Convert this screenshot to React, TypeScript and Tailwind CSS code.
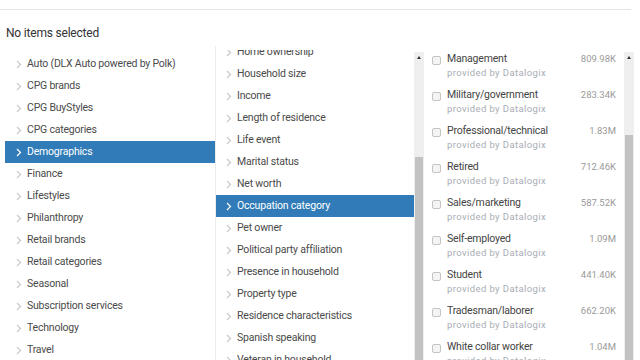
const categories = [
  'Auto (DLX Auto powered by Polk)',
  'CPG brands',
  'CPG BuyStyles',
  'CPG categories',
  'Demographics',
  'Finance',
  'Lifestyles',
  'Philanthropy',
  'Retail brands',
  'Retail categories',
  'Seasonal',
  'Subscription services',
  'Technology',
  'Travel',
]

const demographics = [
  'Home ownership',
  'Household size',
  'Income',
  'Length of residence',
  'Life event',
  'Marital status',
  'Net worth',
  'Occupation category',
  'Pet owner',
  'Political party affiliation',
  'Presence in household',
  'Property type',
  'Residence characteristics',
  'Spanish speaking',
  'Veteran in household',
]

const occupations = [
  { name: 'Management', size: '809.98K' },
  { name: 'Military/government', size: '283.34K' },
  { name: 'Professional/technical', size: '1.83M' },
  { name: 'Retired', size: '712.46K' },
  { name: 'Sales/marketing', size: '587.52K' },
  { name: 'Self-employed', size: '1.09M' },
  { name: 'Student', size: '441.40K' },
  { name: 'Tradesman/laborer', size: '662.20K' },
  { name: 'White collar worker', size: '1.04M' },
]

function Chevron({ active }: { active: boolean }) {
  return (
    <svg width="6" height="9" viewBox="0 0 6 9" className="shrink-0">
      <polyline
        points="1,1 4.5,4.5 1,8"
        fill="none"
        stroke={active ? '#ffffff' : '#cacaca'}
        strokeWidth="1.2"
      />
    </svg>
  )
}

function Row({ label, active, chevronPad }: { label: string; active: boolean; chevronPad: string }) {
  return (
    <div
      className={`flex h-[22px] items-center whitespace-nowrap ${chevronPad} ${
        active ? 'bg-[#307bb8] text-white' : 'text-[#4a4a4a]'
      }`}
    >
      <Chevron active={active} />
      <span className="ml-[5px]">{label}</span>
    </div>
  )
}

function Scrollbar({ thumbTop }: { thumbTop: string }) {
  return (
    <div className="relative mt-[6px] h-[308px] w-[10px] shrink-0 bg-[#efefef]">
      <div className="flex h-[10px] items-center justify-center">
        <div className="h-0 w-0 border-x-[2.5px] border-b-[3px] border-x-transparent border-b-[#333]" />
      </div>
      <div className={`absolute left-[1px] right-[1px] bottom-0 bg-[#c2c2c2] ${thumbTop}`} />
    </div>
  )
}

export default function App() {
  return (
    <div
      className="h-[360px] w-[640px] overflow-hidden bg-white text-[10.5px] tracking-[-0.2px]"
      style={{ fontFamily: 'Roboto, "Liberation Sans", sans-serif' }}
    >
      <div className="mt-[9px] w-[631px] border-t border-[#e4e4e4]" />
      <div className="mt-[16px] pl-[6px] text-[12px] leading-[15px] text-[#333]">No items selected</div>

      <div className="mt-[5px] flex items-start">
        <div className="w-[215px] shrink-0 pt-[7px] pl-[5px]">
          {categories.map((c) => (
            <Row key={c} label={c} active={c === 'Demographics'} chevronPad="pl-[11px]" />
          ))}
        </div>

        <div className="flex h-[314px] shrink-0 border-l border-[#ececec]">
          <div className="mt-[4px] h-[310px] w-[198px] overflow-hidden">
            <div className="-mt-[9px]">
              {demographics.map((d) => (
                <Row key={d} label={d} active={d === 'Occupation category'} chevronPad="pl-[10px]" />
              ))}
            </div>
          </div>
          <Scrollbar thumbTop="top-[105px]" />
        </div>

        <div className="flex h-[314px] shrink-0">
          <div className="h-full w-[200px] overflow-hidden pt-[2px]">
            {occupations.map((o) => (
              <div key={o.name} className="flex h-[36px] pl-[8px] pr-[8px] pt-[4px]">
                <div className="mt-[4px] h-[9px] w-[9px] shrink-0 rounded-[2px] border border-[#c4c4c4] bg-[#f4f4f4]" />
                <div className="ml-[6px] flex-1">
                  <div className="leading-[14px] text-[#444]">{o.name}</div>
                  <div className="mt-[1px] text-[9.5px] leading-[12px] tracking-[0.4px] text-[#a9adb5]">
                    provided by Datalogix
                  </div>
                </div>
                <div className="text-[9.5px] leading-[14px] tracking-[0px] text-[#9a9a9a]">{o.size}</div>
              </div>
            ))}
          </div>
          <Scrollbar thumbTop="top-[83px]" />
        </div>
      </div>
    </div>
  )
}
